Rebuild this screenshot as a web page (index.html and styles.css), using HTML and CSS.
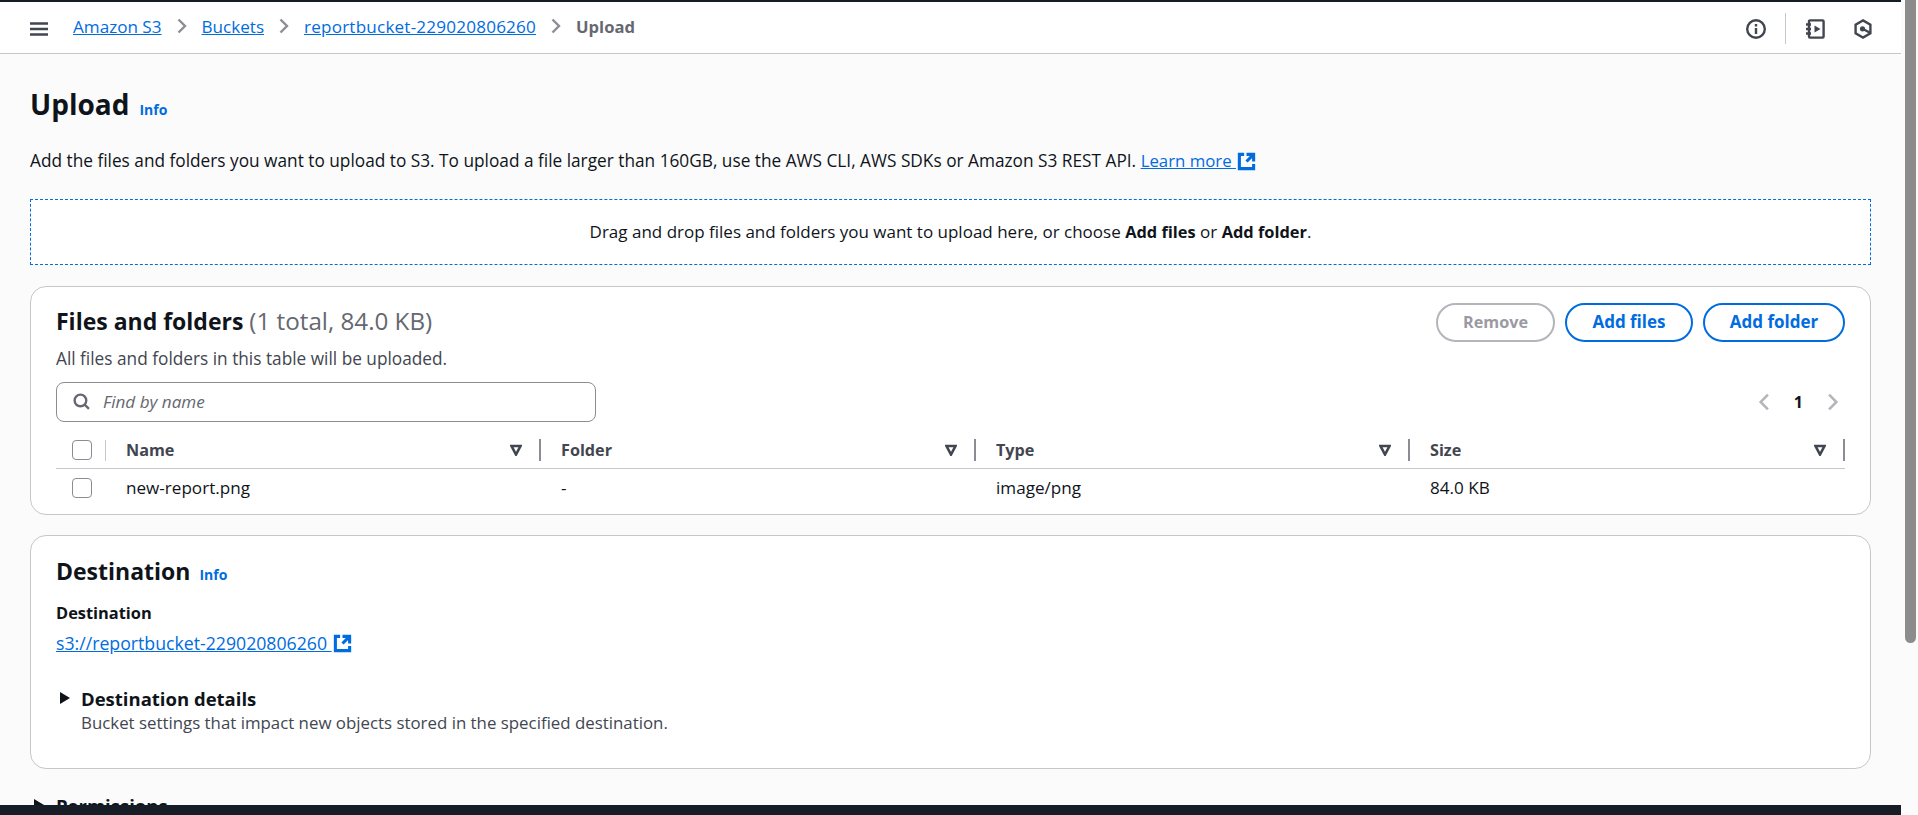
FILE: index.html
```html
<!DOCTYPE html>
<html lang="en">
<head>
    <meta charset="UTF-8">
    <title>Upload - S3 bucket</title>
    <link rel="stylesheet" href="styles.css">
</head>
<body>
    <div class="app">
        <header class="topbar">
            <svg class="icon menu" viewBox="0 0 18 14"><path d="M0 1.5h18M0 7h18M0 12.5h18"/></svg>
            <nav class="crumbs">
                <a href="#">Amazon S3</a>
                <svg class="crumb-sep" viewBox="0 0 10 16"><path d="M1.5 1.5 8 8l-6.5 6.5"/></svg>
                <a href="#">Buckets</a>
                <svg class="crumb-sep" viewBox="0 0 10 16"><path d="M1.5 1.5 8 8l-6.5 6.5"/></svg>
                <a class="crumb-long" href="#">reportbucket-229020806260</a>
                <svg class="crumb-sep" viewBox="0 0 10 16"><path d="M1.5 1.5 8 8l-6.5 6.5"/></svg>
                <span class="crumb-current">Upload</span>
            </nav>
            <div class="tools">
                <svg class="tool" viewBox="0 0 20 20"><circle cx="10" cy="10" r="8.8"/><path d="M10 9v6M10 5v2.4"/></svg>
                <span class="tool-sep"></span>
                <svg class="tool" viewBox="0 0 20 20"><rect x="4" y="1.4" width="14.6" height="17.2" rx="1"/><path d="M1 5.5h5M1 10h5M1 14.5h5"/><path class="solid" d="M9.5 6.5l6 3.5-6 3.5z"/></svg>
                <svg class="tool tool-last" viewBox="0 0 20 20"><path d="M10 1.4 17.4 5.7v8.6L10 18.6 2.6 14.3V5.7z"/><circle class="solid" cx="9.5" cy="9.8" r="2.6"/><path d="M10 10l7 3.8"/></svg>
            </div>
        </header>

        <main class="content">
            <div class="page-head">
                <h1>Upload</h1>
                <a class="info" href="#">Info</a>
            </div>
            <p class="intro">Add the files and folders you want to upload to S3. To upload a file larger than 160GB, use the AWS CLI, AWS SDKs or Amazon S3 REST API. <a href="#">Learn more </a><svg class="ext" viewBox="0 0 16 16"><path d="M14 8V2H8M14 2 8 8M6 2H2v12h12v-4"/></svg></p>

            <div class="dropzone">
                <span>Drag and drop files and folders you want to upload here, or choose <b>Add files</b> or <b>Add folder</b>.</span>
            </div>

            <section class="card files">
                <div class="files-head">
                    <div>
                        <h2>Files and folders <span class="count">(1 total, 84.0 KB)</span></h2>
                    </div>
                    <div class="actions">
                        <button class="btn btn-off">Remove</button>
                        <button class="btn">Add files</button>
                        <button class="btn">Add folder</button>
                    </div>
                </div>
                <p class="files-note">All files and folders in this table will be uploaded.</p>
                <div class="filter-row">
                    <div class="search">
                        <svg class="search-icon" viewBox="0 0 16 16"><circle cx="7" cy="7" r="5.5"/><path d="m11 11 4 4"/></svg>
                        <span>Find by name</span>
                    </div>
                    <div class="pager">
                        <svg viewBox="0 0 10 16"><path d="M8.5 1.5 2 8l6.5 6.5"/></svg>
                        <b>1</b>
                        <svg viewBox="0 0 10 16"><path d="M1.5 1.5 8 8l-6.5 6.5"/></svg>
                    </div>
                </div>
                <div class="table">
                    <div class="row row-head">
                        <div class="cell-check"><span class="check"></span><span class="check-sep"></span></div>
                        <div class="cell">Name<svg class="sort" viewBox="0 0 12 12"><path d="M1.5 2h9L6 10.5z"/></svg></div>
                        <div class="cell">Folder<svg class="sort" viewBox="0 0 12 12"><path d="M1.5 2h9L6 10.5z"/></svg></div>
                        <div class="cell">Type<svg class="sort" viewBox="0 0 12 12"><path d="M1.5 2h9L6 10.5z"/></svg></div>
                        <div class="cell">Size<svg class="sort" viewBox="0 0 12 12"><path d="M1.5 2h9L6 10.5z"/></svg></div>
                    </div>
                    <div class="row row-body">
                        <div class="cell-check"><span class="check"></span></div>
                        <div class="cell">new-report.png</div>
                        <div class="cell">-</div>
                        <div class="cell">image/png</div>
                        <div class="cell">84.0 KB</div>
                    </div>
                </div>
            </section>

            <section class="card dest">
                <div class="dest-head">
                    <h2>Destination</h2>
                    <a class="info" href="#">Info</a>
                </div>
                <div class="dest-label">Destination</div>
                <div class="dest-link"><a href="#">s3://reportbucket-229020806260 </a><svg class="ext" viewBox="0 0 16 16"><path d="M14 8V2H8M14 2 8 8M6 2H2v12h12v-4"/></svg></div>
                <div class="expander">
                    <span class="caret"></span>
                    <div>
                        <div class="expander-title">Destination details</div>
                        <div class="expander-note">Bucket settings that impact new objects stored in the specified destination.</div>
                    </div>
                </div>
            </section>

            <div class="expander-plain">
                <span class="caret"></span>
                <span class="expander-title">Permissions</span>
            </div>
        </main>

        <footer class="footer"></footer>
    </div>
    <div class="scrollbar"><div class="thumb"></div></div>
</body>
</html>
```

FILE: styles.css
```css
*{
    box-sizing: border-box;
}

html,body{
    height: 100%;
}

body{
    margin: 0;
    display: flex;
    height: 815px;
    overflow: hidden;
    background-color: #fbfbfb;
    color: #0f141a;
    font-family: "Open Sans", "Noto Sans", sans-serif;
    font-size: 17.1px;
}

a{
    color: #006ce0;
}

svg{
    fill: none;
    flex: none;
}

.app{
    width: 1901px;
    display: flex;
    flex-direction: column;
}

.scrollbar{
    flex: 1;
    padding: 0 2px 0 4px;
}

.thumb{
    height: 643px;
    background-color: #8c8c8c;
    border-radius: 0 0 6px 6px;
}

.topbar{
    height: 54px;
    flex: none;
    display: flex;
    align-items: center;
    padding: 2px 0 0 30px;
    background-color: #fff;
    border-top: 2px solid #161d26;
    border-bottom: 1px solid #c6c6cd;
}

.icon.menu{
    width: 18px;
    height: 14px;
    stroke: #424650;
    stroke-width: 2.4;
}

.crumbs{
    display: flex;
    align-items: center;
    margin: -5px 0 0 25px;
}

.crumb-long{
    letter-spacing: .2px;
}

.crumb-sep{
    width: 10px;
    height: 16px;
    margin: 0 15px;
    stroke: #8c8c94;
    stroke-width: 2.4;
}

.crumb-current{
    color: #656871;
    font-size: 16.6px;
    font-weight: 700;
}

.tools{
    margin-left: auto;
    display: flex;
    align-items: center;
}

.tool{
    width: 20px;
    height: 20px;
    stroke: #424650;
    stroke-width: 2.4;
}

.tool .solid{
    fill: #424650;
    stroke: none;
}

.tool-sep{
    width: 1px;
    height: 31px;
    margin: 0 19px;
    background-color: #c6c6cd;
}

.tool-last{
    margin: 0 28px 0 28px;
}

.content{
    flex: 1;
    min-height: 0;
    overflow: hidden;
    padding: 0 30px;
}

.page-head{
    display: flex;
    align-items: baseline;
    gap: 10px;
    margin-top: 31px;
    height: 38px;
}

h1{
    margin: 0;
    font-size: 28px;
    line-height: 38px;
    font-weight: 700;
}

.info{
    font-size: 14px;
    font-weight: 700;
    text-decoration: none;
}

.intro{
    margin: 26px 0 0;
    line-height: 24px;
    font-size: 17.25px;
    display: flex;
    align-items: center;
    white-space: pre-wrap;
}

.intro a{
    font-size: 16.8px;
}

.ext{
    width: 19px;
    height: 19px;
    margin-left: 1px;
    stroke: #006ce0;
    stroke-width: 2.6;
}

.dropzone{
    margin-top: 26px;
    height: 66px;
    padding-bottom: 2px;
    display: flex;
    align-items: center;
    justify-content: center;
    background-color: #fff;
    border: 1px dashed #006ce0;
    font-size: 17px;
}

.dropzone b{
    font-size: 16.4px;
}

.card{
    background-color: #fff;
    border: 1px solid #c6c6cd;
    border-radius: 16px;
    padding: 16px 25px 0;
}

.files{
    margin-top: 21px;
    height: 229px;
}

.files-head{
    display: flex;
    justify-content: space-between;
    align-items: center;
    height: 39px;
}

.files-head h2{
    margin-top: -3px;
}

h2{
    margin: 0;
    font-size: 23px;
    line-height: 30px;
    font-weight: 700;
}

.count{
    color: #656871;
    font-size: 24.2px;
    font-weight: 400;
}

.actions{
    display: flex;
    gap: 10px;
}

.btn{
    height: 39px;
    width: 128px;
    padding: 0 0 2px;
    background-color: #fff;
    border: 2px solid #006ce0;
    border-radius: 20px;
    color: #006ce0;
    font: 700 17px "Open Sans", sans-serif;
}

.btn:last-child{
    width: 142px;
}

.btn-off{
    width: 119px;
    border-color: #b4b4bb;
    color: #9a9aa2;
    font-size: 16.2px;
}

.files-note{
    margin: 5px 0 0;
    line-height: 24px;
    font-size: 17.25px;
    color: #424650;
}

.filter-row{
    display: flex;
    justify-content: space-between;
    align-items: center;
    margin-top: 11px;
}

.search{
    width: 540px;
    height: 40px;
    display: flex;
    align-items: center;
    gap: 13px;
    padding: 0 0 1px 16px;
    border: 1px solid #8c8c94;
    border-radius: 8px;
    color: #656871;
    font-style: italic;
}

.search-icon{
    width: 17px;
    height: 17px;
    stroke: #656871;
    stroke-width: 2.2;
}

.pager{
    display: flex;
    align-items: center;
    gap: 24px;
    padding-right: 6px;
    font-size: 16px;
}

.pager svg{
    width: 12px;
    height: 18px;
    stroke: #b4b4bb;
    stroke-width: 2.2;
}

.table{
    margin-top: 10px;
}

.row{
    display: grid;
    grid-template-columns: 50px 435px 435px 434px 435px;
    align-items: center;
}

.row-head{
    height: 37px;
    border-bottom: 1px solid #c6c6cd;
    color: #424650;
    font-size: 16.2px;
    font-weight: 700;
}

.row-body{
    height: 38px;
}

.row-body .cell{
    padding-bottom: 2px;
}

.cell-check{
    height: 100%;
    display: flex;
    align-items: center;
    padding-left: 16px;
}

.check{
    width: 20px;
    height: 20px;
    border: 1px solid #8c8c94;
    border-radius: 4px;
    background-color: #fff;
}

.check-sep{
    width: 1px;
    height: 21px;
    margin-left: 13px;
    background-color: #c6c6cd;
}

.cell{
    padding-left: 20px;
}

.row-head .cell{
    height: 22px;
    display: flex;
    align-items: center;
    justify-content: space-between;
    padding-right: 17px;
    border-right: 2px solid #8c8c94;
}

.sort{
    width: 12px;
    height: 12px;
    stroke: #424650;
    stroke-width: 2.6;
}

.dest{
    margin-top: 20px;
    height: 234px;
    padding-top: 20px;
}

.dest-head{
    display: flex;
    align-items: baseline;
    gap: 9px;
}

.dest-label{
    margin-top: 16px;
    line-height: 22px;
    font-size: 16.4px;
    font-weight: 700;
}

.dest-link{
    margin-top: 8px;
    line-height: 22px;
    font-size: 17.7px;
    display: flex;
    align-items: center;
    white-space: pre-wrap;
}

.expander{
    margin-top: 32px;
    display: flex;
    gap: 11px;
}

.caret{
    flex: none;
    width: 0;
    height: 0;
    margin: 6px 0 0 4px;
    border-left: 10px solid #0f141a;
    border-top: 6.5px solid transparent;
    border-bottom: 6.5px solid transparent;
}

.expander-title{
    line-height: 26px;
    font-size: 18.5px;
    font-weight: 700;
}

.expander-note{
    line-height: 22px;
    font-size: 16.85px;
    color: #424650;
}

.expander-plain{
    margin-top: 24px;
    display: flex;
    gap: 12px;
    align-items: flex-start;
}

.footer{
    height: 10px;
    flex: none;
    background-color: #161d26;
}
```
